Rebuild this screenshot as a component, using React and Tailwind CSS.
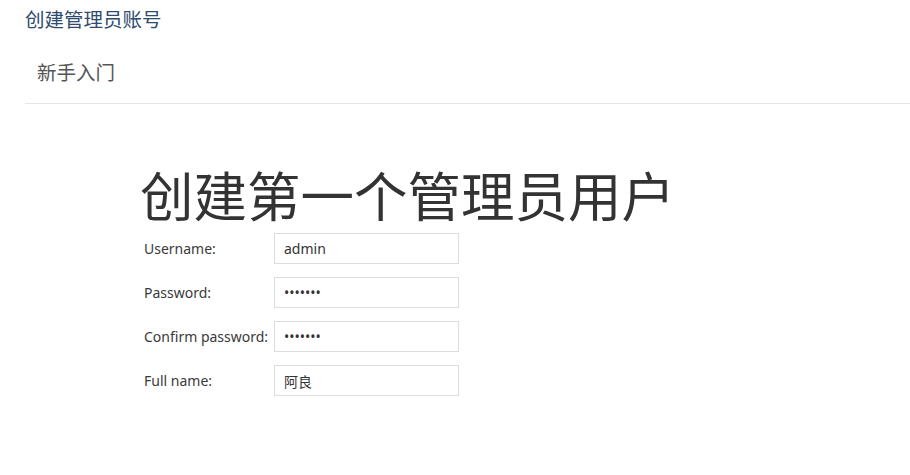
import React from "react";

const FIELDS = [
  { label: "Username:", value: "admin", type: "text" },
  { label: "Password:", value: "1234567", type: "password" },
  { label: "Confirm password:", value: "1234567", type: "password" },
  { label: "Full name:", value: "阿良", type: "text" },
];

const cjk = {
  fontFamily: '"Noto Sans", "Noto Sans CJK SC", sans-serif',
};

export default function App() {
  return (
    <div className="min-h-[475px] bg-white text-[#333]" style={cjk}>
      {/* page title */}
      <div className="pl-[25px] pt-[7px] text-[19.5px] leading-[26px] text-[#2f4b6e]">
        创建管理员账号
      </div>

      {/* tabs bar */}
      <div className="ml-[25px] mt-[27px] border-b border-[#e5e5e5] pl-[12px] pb-[17px]">
        <span className="text-[19.5px] leading-[26px] text-[#555]">新手入门</span>
      </div>

      {/* setup form */}
      <div className="pl-[140px] pt-[62px]">
        <h1 className="text-[53.5px] leading-[62px] font-normal text-[#333]">
          创建第一个管理员用户
        </h1>
        <div className="mt-[5px] flex flex-col gap-[13px] pl-[4px]">
          {FIELDS.map((f) => (
            <div key={f.label} className="flex items-center">
              <label className="w-[130px] text-[14px] text-[#3a3a3a]">{f.label}</label>
              <input
                type={f.type}
                defaultValue={f.value}
                readOnly
                className="h-[31px] w-[185px] border border-[#ddd] px-[9px] text-[14px] text-[#333] outline-none"
              />
            </div>
          ))}
        </div>
      </div>
    </div>
  );
}
